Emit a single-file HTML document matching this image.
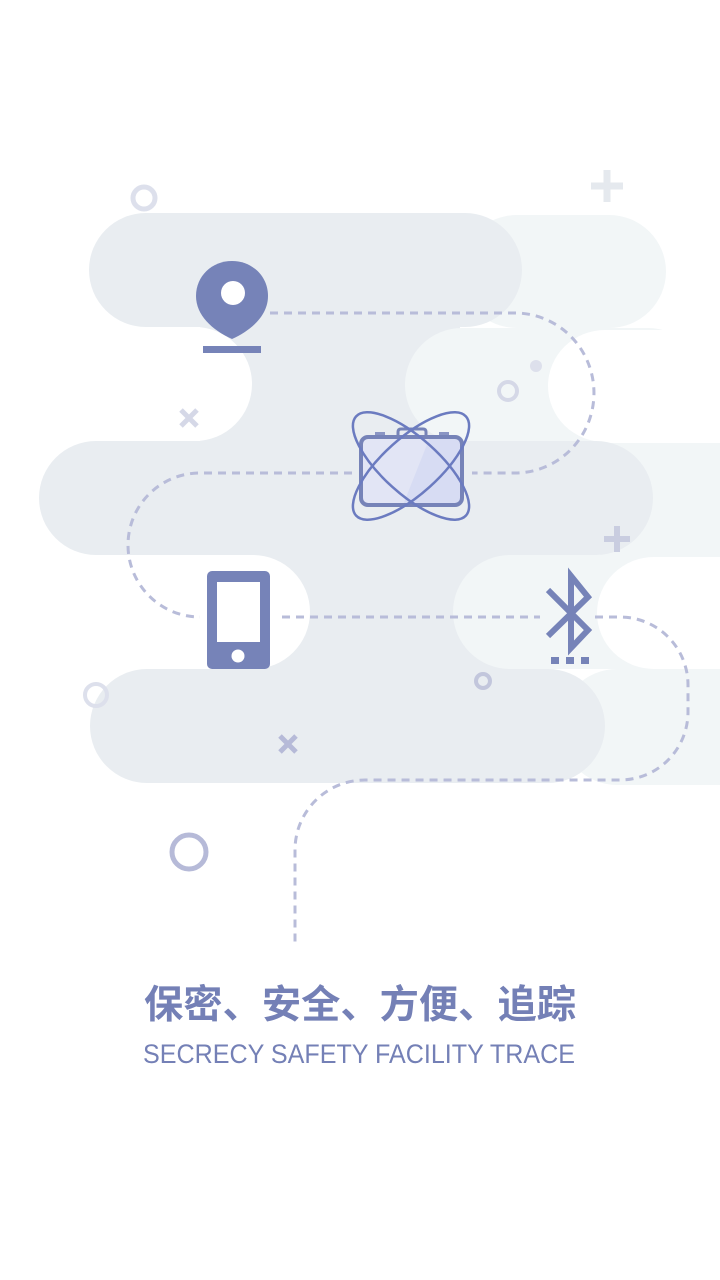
<!DOCTYPE html>
<html><head><meta charset="utf-8"><style>
html,body{margin:0;padding:0;background:#fff;width:720px;height:1280px;overflow:hidden}
svg{display:block}
</style></head><body>
<svg width="720" height="1280" viewBox="0 0 720 1280" xmlns="http://www.w3.org/2000/svg">
<g fill="#e9edf1">
<rect x="200" y="300" width="260" height="170"/>
<rect x="250" y="530" width="260" height="160"/>
</g>
<!-- light shapes -->
<g fill="#f2f6f7">
<rect x="460" y="215" width="206" height="113" rx="57"/>
<rect x="405" y="328" width="300" height="114" rx="57"/>
<rect x="600" y="443" width="200" height="114"/>
<rect x="453" y="555" width="400" height="114" rx="57"/>
<rect x="560" y="669" width="300" height="116" rx="57"/>
</g>
<g fill="#fff">
<rect x="-100" y="327" width="352" height="114" rx="57"/>
<rect x="548" y="330" width="300" height="112" rx="57"/>
<rect x="-100" y="555" width="410" height="114" rx="57"/>
<rect x="597" y="557" width="300" height="112" rx="57"/>
</g>
<g fill="#e9edf1">
<rect x="89" y="213" width="433" height="114" rx="57"/>
<rect x="39" y="441" width="614" height="114" rx="57"/>
<rect x="90" y="669" width="515" height="114" rx="57"/>
</g>
<!-- dashed path -->
<path d="M270 313 H515 A79 80 0 0 1 515 473 H472 M352 473 H200 A72 72 0 0 0 200 617 M282 617 H540 M595 617 H620 A68 68 0 0 1 688 685 V712 A68 68 0 0 1 620 780 H365 A70 70 0 0 0 295 850 V942" fill="none" stroke="#b8bcd9" stroke-width="3" stroke-dasharray="8 6"/>
<!-- decorations -->
<circle cx="144" cy="198" r="11" fill="none" stroke="#dde0ec" stroke-width="5"/>
<path d="M607 170V202M591 186H623" stroke="#e5e9ee" stroke-width="7"/>
<path d="M181 410L197 426M197 410L181 426" stroke="#d5d8e7" stroke-width="5"/>
<circle cx="508" cy="391" r="9" fill="none" stroke="#d5d8e7" stroke-width="4"/>
<circle cx="536" cy="366" r="6" fill="#dde0ec"/>
<path d="M617 526V552M604 539H630" stroke="#c9cde0" stroke-width="6"/>
<circle cx="96" cy="695" r="11" fill="none" stroke="#dde0ec" stroke-width="4"/>
<circle cx="483" cy="681" r="7" fill="none" stroke="#c2c6dc" stroke-width="4"/>
<path d="M280 736L296 752M296 736L280 752" stroke="#b6bad8" stroke-width="5"/>
<circle cx="189" cy="852" r="17" fill="none" stroke="#b6bad8" stroke-width="5"/>
<!-- pin -->
<path d="M232 261C212 261 196 276 196 296C196 315 212 330 232 339C252 330 268 315 268 296C268 276 252 261 232 261Z" fill="#7683b8"/>
<circle cx="233" cy="293" r="12" fill="#fff"/>
<rect x="203" y="346" width="58" height="7" fill="#7683b8"/>
<!-- briefcase -->
<rect x="375" y="432" width="10" height="6" fill="#8a95c4"/>
<rect x="439" y="432" width="10" height="6" fill="#8a95c4"/>
<path d="M398 437V432Q398 429 401 429H423Q426 429 426 432V437" fill="none" stroke="#7683b8" stroke-width="3"/>
<rect x="361" y="437" width="101" height="68" rx="7" fill="#e2e5f5"/>
<path d="M430 437L403 505H455Q462 505 462 498V444Q462 437 455 437Z" fill="#d7dcf3"/>
<rect x="361" y="437" width="101" height="68" rx="7" fill="none" stroke="#7683b8" stroke-width="4"/>
<ellipse cx="411" cy="466" rx="74" ry="28" transform="rotate(-42 411 466)" fill="none" stroke="#6b7bc0" stroke-width="2.5"/>
<ellipse cx="411" cy="466" rx="74" ry="28" transform="rotate(42 411 466)" fill="none" stroke="#6b7bc0" stroke-width="2.5"/>
<!-- phone -->
<rect x="207" y="571" width="63" height="98" rx="5" fill="#7683b8"/>
<rect x="217" y="582" width="43" height="60" fill="#fff"/>
<circle cx="238" cy="656" r="6.5" fill="#fff"/>
<!-- bluetooth -->
<path d="M548 590L588 630L571 648V576L588 597L548 636" fill="none" stroke="#7683b8" stroke-width="6"/>
<rect x="551" y="657" width="8" height="7" fill="#7683b8"/>
<rect x="566" y="657" width="8" height="7" fill="#7683b8"/>
<rect x="581" y="657" width="8" height="7" fill="#7683b8"/>
<!-- text -->
<text x="360" y="1018" text-anchor="middle" font-family="'Noto Sans CJK SC','WenQuanYi Zen Hei',sans-serif" font-weight="bold" font-size="39" fill="#7480b6" textLength="432" lengthAdjust="spacingAndGlyphs">保密、安全、方便、追踪</text>
<text x="359" y="1063" text-anchor="middle" font-family="'Liberation Sans',sans-serif" font-size="27" fill="#7480b6" textLength="432" lengthAdjust="spacingAndGlyphs">SECRECY SAFETY FACILITY TRACE</text>
</svg>
</body></html>
